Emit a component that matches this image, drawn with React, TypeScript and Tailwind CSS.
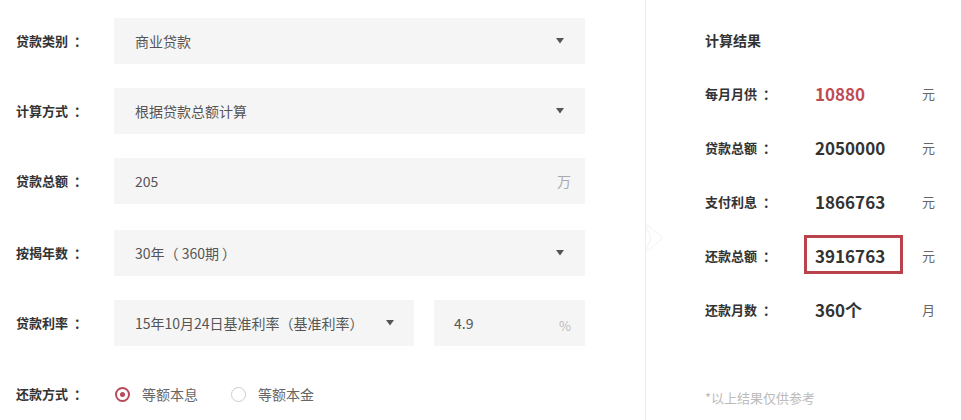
const font = { fontFamily: '"Noto Sans CJK SC", "Noto Sans", sans-serif' }

function Arrow() {
  return (
    <svg width="8" height="6" viewBox="0 0 8 6" className="shrink-0">
      <path d="M0 0 H8 L4 5.5 Z" fill="#555" />
    </svg>
  )
}

function Label({ text, width = 'w-[98px]' }: { text: string; width?: string }) {
  return (
    <div className={`${width} shrink-0 text-[13px] font-bold text-[#333]`}>
      {text}
      <span className="ml-[6px]">：</span>
    </div>
  )
}

function SelectBox({ value, width }: { value: string; width: string }) {
  return (
    <div className={`${width} h-[46px] bg-[#f5f5f6] flex items-center justify-between pl-[21px] pr-[21px]`}>
      <span className="text-[14px] text-[#555]">{value}</span>
      <Arrow />
    </div>
  )
}

type Result = { label: string; value: string; unit: string; red?: boolean; boxed?: boolean }

const results: Result[] = [
  { label: '每月月供', value: '10880', unit: '元', red: true },
  { label: '贷款总额', value: '2050000', unit: '元' },
  { label: '支付利息', value: '1866763', unit: '元' },
  { label: '还款总额', value: '3916763', unit: '元', boxed: true },
  { label: '还款月数', value: '360个', unit: '月' },
]

export default function App() {
  return (
    <div className="w-[961px] h-[420px] bg-white flex overflow-hidden" style={font}>
      <div className="w-[645px] shrink-0 pl-4 pt-[18px]">
        <div className="flex items-center">
          <Label text="贷款类别" />
          <SelectBox value="商业贷款" width="w-[471px]" />
        </div>
        <div className="flex items-center mt-[24px]">
          <Label text="计算方式" />
          <SelectBox value="根据贷款总额计算" width="w-[471px]" />
        </div>
        <div className="flex items-center mt-[24px]">
          <Label text="贷款总额" />
          <div className="w-[471px] h-[46px] bg-[#f5f5f6] flex items-center justify-between pl-[21px] pr-[14px]">
            <span className="text-[14px] text-[#555]">205</span>
            <span className="text-[14px] text-[#aaa]">万</span>
          </div>
        </div>
        <div className="flex items-center mt-[26px]">
          <Label text="按揭年数" />
          <SelectBox value="30年（ 360期 ）" width="w-[471px]" />
        </div>
        <div className="flex items-center mt-[24px]">
          <Label text="贷款利率" />
          <div className="w-[300px] h-[46px] bg-[#f5f5f6] flex items-center justify-between pl-[21px] pr-[20px]">
            <span className="text-[14px] text-[#555]">15年10月24日基准利率（基准利率）</span>
            <Arrow />
          </div>
          <div className="ml-[20px] w-[151px] h-[46px] bg-[#f5f5f6] flex items-center justify-between pl-[20px] pr-[14px]">
            <span className="text-[14px] text-[#555]">4.9</span>
            <span className="text-[13px] text-[#bbb] mt-[6px]">%</span>
          </div>
        </div>
        <div className="flex items-center mt-[25px] h-[46px]">
          <Label text="还款方式" />
          <div className="flex items-center">
            <span className="w-[15px] h-[15px] rounded-full border-2 border-[#b94a58] flex items-center justify-center ml-[1px]">
              <span className="w-[5px] h-[5px] rounded-full bg-[#b94a58]" />
            </span>
            <span className="ml-[12px] text-[14px] text-[#666]">等额本息</span>
            <span className="ml-[33px] w-[15px] h-[15px] rounded-full border border-[#ccc]" />
            <span className="ml-[12px] text-[14px] text-[#666]">等额本金</span>
          </div>
        </div>
      </div>

      <div className="relative flex-1 border-l border-[#ececec] pl-[59px] pt-[13px]">
        <svg width="26" height="34" viewBox="0 0 26 34" className="absolute left-[-3px] top-[221px]">
          <path d="M2 2 L20 17 L2 32 L8 17 Z" fill="#fff" stroke="#f3f3f3" strokeWidth="1" />
        </svg>
        <div className="h-[54px] flex items-center text-[14px] font-bold text-[#333]">计算结果</div>
        {results.map((r) => (
          <div key={r.label} className="h-[54px] flex items-center">
            <Label text={r.label} width="w-[110px]" />
            <div className="relative w-[107px] h-full flex items-center">
              {r.boxed && (
                <div className="absolute left-[-11px] top-[6px] w-[99px] h-[39px] border-[3px] border-[#b8434c]" />
              )}
              <span className={`text-[17px] font-bold ${r.red ? 'text-[#bf4b55]' : 'text-[#333]'}`}>{r.value}</span>
            </div>
            <div className="text-[13px] text-[#666]">{r.unit}</div>
          </div>
        ))}
        <div className="mt-[51px] text-[13px] text-[#bbb]">*以上结果仅供参考</div>
      </div>
    </div>
  )
}
